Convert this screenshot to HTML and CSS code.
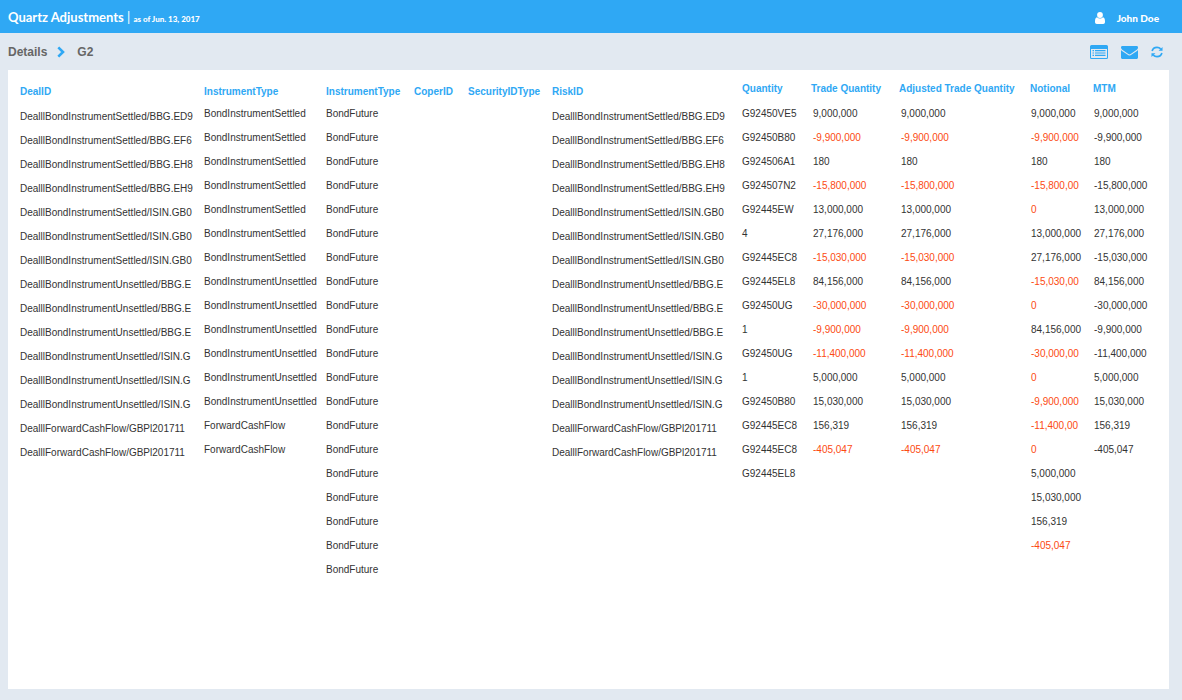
FILE: index.html
```html
<!DOCTYPE html>
<html lang="en">
<head>
<meta charset="utf-8">
<title>Quartz Adjustments</title>
<link rel="stylesheet" href="styles.css">
</head>
<body>
<header class="topbar">
  <h1 class="title">Quartz Adjustments <span class="divider">|</span> <span class="asof">as of Jun. 13, 2017</span></h1>
  <a class="user" href="#">
    <svg class="user-icon" viewBox="0 0 10 12" aria-hidden="true"><circle cx="5" cy="3" r="2.9"/><path d="M2 5.2C.6 5.6 0 7 0 9.4V10c0 1.2.7 2 1.8 2h6.4C9.300 12 10 11.200 10 10v-.6C10 7 9.400 5.600 8 5.200A4 4 0 0 1 2 5.200z"/></svg>
    <span>John Doe</span>
  </a>
</header>
<nav class="subbar" aria-label="Breadcrumb">
  <div class="crumbs">
    <a href="#">Details</a>
    <svg class="chevron" viewBox="0 0 8 12" aria-hidden="true"><path d="M1.300 1.300 6 6l-4.700 4.700"/></svg>
    <span>G2</span>
  </div>
  <div class="actions">
    <button type="button" aria-label="List view"><svg width="18" height="14" viewBox="0 0 18 14"><path fill-rule="evenodd" d="M1.500 0h15A1.500 1.500 0 0 1 18 1.500v11a1.500 1.500 0 0 1-1.500 1.500h-15A1.500 1.500 0 0 1 0 12.500v-11A1.500 1.500 0 0 1 1.500 0zM1 4v8.500c0 .3.200.5.500.5h15c.3 0 .5-.2.500-.5V4z"/><path d="M2.500 5h1.500v1.200H2.500zM5 5h10.500v1.200H5zM2.500 7.400h1.500v1.200H2.500zM5 7.400h10.500v1.200H5zM2.500 9.800h1.500V11H2.500zM5 9.800h10.500V11H5z"/></svg></button>
    <button type="button" aria-label="Mail"><svg width="17" height="13" viewBox="0 0 17 13"><path d="M1.400 0h14.200C16.500 0 17 .6 17 1.400c0 1-.7 1.900-1.600 2.500L10 7.700c-.6.400-1 .7-1.500.7S7.600 8.100 7 7.700L1.600 3.900C.8 3.400 0 2.300 0 1.500 0 .6.500 0 1.400 0z"/><path d="M0 4.100c.3.300.6.500 1 .8l5.300 3.700c.7.500 1.400.9 2.200.9s1.500-.4 2.200-.9L16 4.900c.4-.3.700-.5 1-.8v7.400c0 .8-.7 1.500-1.500 1.500h-14C.7 13 0 12.300 0 11.500z"/></svg></button>
    <button type="button" aria-label="Refresh"><svg width="12" height="12" viewBox="0 0 13 12"><g fill="none" stroke="currentColor" stroke-width="1.800"><path d="M1.200 4.900C1.800 2.600 4 1 6.500 1c1.600 0 3 .6 4 1.600"/><path d="M11.800 7.100C11.200 9.400 9 11 6.500 11c-1.600 0-3-.6-4-1.600"/></g><path d="M12.500.5v4.200H8.200zM.5 11.500V7.300h4.300z"/></svg></button>
  </div>
</nav>
<main class="panel">
<table class="deals">
<colgroup><col class="c-deal"><col class="c-type"><col class="c-kind"><col class="c-coper"><col class="c-security"><col class="c-risk"><col class="c-quantity"><col class="c-trade"><col class="c-adjusted"><col class="c-notional"><col class="c-mtm"></colgroup>
<thead><tr><th class="low">DealID</th><th class="low">InstrumentType</th><th class="low">InstrumentType</th><th class="low">CoperID</th><th class="low">SecurityIDType</th><th class="low">RiskID</th><th>Quantity</th><th>Trade Quantity</th><th>Adjusted Trade Quantity</th><th>Notional</th><th>MTM</th></tr></thead>
<tbody>
<tr><td class="low">DealllBondInstrumentSettled/BBG.ED9</td><td>BondInstrumentSettled</td><td>BondFuture</td><td></td><td></td><td class="low">DealllBondInstrumentSettled/BBG.ED9</td><td>G92450VE5</td><td class="num">9,000,000</td><td class="num">9,000,000</td><td class="amt">9,000,000</td><td class="amt">9,000,000</td></tr>
<tr><td class="low">DealllBondInstrumentSettled/BBG.EF6</td><td>BondInstrumentSettled</td><td>BondFuture</td><td></td><td></td><td class="low">DealllBondInstrumentSettled/BBG.EF6</td><td>G92450B80</td><td class="num neg">-9,900,000</td><td class="num neg">-9,900,000</td><td class="amt neg">-9,900,000</td><td class="amt">-9,900,000</td></tr>
<tr><td class="low">DealllBondInstrumentSettled/BBG.EH8</td><td>BondInstrumentSettled</td><td>BondFuture</td><td></td><td></td><td class="low">DealllBondInstrumentSettled/BBG.EH8</td><td>G924506A1</td><td class="num">180</td><td class="num">180</td><td class="amt">180</td><td class="amt">180</td></tr>
<tr><td class="low">DealllBondInstrumentSettled/BBG.EH9</td><td>BondInstrumentSettled</td><td>BondFuture</td><td></td><td></td><td class="low">DealllBondInstrumentSettled/BBG.EH9</td><td>G924507N2</td><td class="num neg">-15,800,000</td><td class="num neg">-15,800,000</td><td class="amt neg">-15,800,00</td><td class="amt">-15,800,000</td></tr>
<tr><td class="low">DealllBondInstrumentSettled/ISIN.GB0</td><td>BondInstrumentSettled</td><td>BondFuture</td><td></td><td></td><td class="low">DealllBondInstrumentSettled/ISIN.GB0</td><td>G92445EW</td><td class="num">13,000,000</td><td class="num">13,000,000</td><td class="amt neg">0</td><td class="amt">13,000,000</td></tr>
<tr><td class="low">DealllBondInstrumentSettled/ISIN.GB0</td><td>BondInstrumentSettled</td><td>BondFuture</td><td></td><td></td><td class="low">DealllBondInstrumentSettled/ISIN.GB0</td><td>4</td><td class="num">27,176,000</td><td class="num">27,176,000</td><td class="amt">13,000,000</td><td class="amt">27,176,000</td></tr>
<tr><td class="low">DealllBondInstrumentSettled/ISIN.GB0</td><td>BondInstrumentSettled</td><td>BondFuture</td><td></td><td></td><td class="low">DealllBondInstrumentSettled/ISIN.GB0</td><td>G92445EC8</td><td class="num neg">-15,030,000</td><td class="num neg">-15,030,000</td><td class="amt">27,176,000</td><td class="amt">-15,030,000</td></tr>
<tr><td class="low">DealllBondInstrumentUnsettled/BBG.E</td><td>BondInstrumentUnsettled</td><td>BondFuture</td><td></td><td></td><td class="low">DealllBondInstrumentUnsettled/BBG.E</td><td>G92445EL8</td><td class="num">84,156,000</td><td class="num">84,156,000</td><td class="amt neg">-15,030,00</td><td class="amt">84,156,000</td></tr>
<tr><td class="low">DealllBondInstrumentUnsettled/BBG.E</td><td>BondInstrumentUnsettled</td><td>BondFuture</td><td></td><td></td><td class="low">DealllBondInstrumentUnsettled/BBG.E</td><td>G92450UG</td><td class="num neg">-30,000,000</td><td class="num neg">-30,000,000</td><td class="amt neg">0</td><td class="amt">-30,000,000</td></tr>
<tr><td class="low">DealllBondInstrumentUnsettled/BBG.E</td><td>BondInstrumentUnsettled</td><td>BondFuture</td><td></td><td></td><td class="low">DealllBondInstrumentUnsettled/BBG.E</td><td>1</td><td class="num neg">-9,900,000</td><td class="num neg">-9,900,000</td><td class="amt">84,156,000</td><td class="amt">-9,900,000</td></tr>
<tr><td class="low">DealllBondInstrumentUnsettled/ISIN.G</td><td>BondInstrumentUnsettled</td><td>BondFuture</td><td></td><td></td><td class="low">DealllBondInstrumentUnsettled/ISIN.G</td><td>G92450UG</td><td class="num neg">-11,400,000</td><td class="num neg">-11,400,000</td><td class="amt neg">-30,000,00</td><td class="amt">-11,400,000</td></tr>
<tr><td class="low">DealllBondInstrumentUnsettled/ISIN.G</td><td>BondInstrumentUnsettled</td><td>BondFuture</td><td></td><td></td><td class="low">DealllBondInstrumentUnsettled/ISIN.G</td><td>1</td><td class="num">5,000,000</td><td class="num">5,000,000</td><td class="amt neg">0</td><td class="amt">5,000,000</td></tr>
<tr><td class="low">DealllBondInstrumentUnsettled/ISIN.G</td><td>BondInstrumentUnsettled</td><td>BondFuture</td><td></td><td></td><td class="low">DealllBondInstrumentUnsettled/ISIN.G</td><td>G92450B80</td><td class="num">15,030,000</td><td class="num">15,030,000</td><td class="amt neg">-9,900,000</td><td class="amt">15,030,000</td></tr>
<tr><td class="low">DealllForwardCashFlow/GBPl201711</td><td>ForwardCashFlow</td><td>BondFuture</td><td></td><td></td><td class="low">DealllForwardCashFlow/GBPl201711</td><td>G92445EC8</td><td class="num">156,319</td><td class="num">156,319</td><td class="amt neg">-11,400,00</td><td class="amt">156,319</td></tr>
<tr><td class="low">DealllForwardCashFlow/GBPl201711</td><td>ForwardCashFlow</td><td>BondFuture</td><td></td><td></td><td class="low">DealllForwardCashFlow/GBPl201711</td><td>G92445EC8</td><td class="num neg">-405,047</td><td class="num neg">-405,047</td><td class="amt neg">0</td><td class="amt">-405,047</td></tr>
<tr><td></td><td></td><td>BondFuture</td><td></td><td></td><td></td><td>G92445EL8</td><td></td><td></td><td class="amt">5,000,000</td><td></td></tr>
<tr><td></td><td></td><td>BondFuture</td><td></td><td></td><td></td><td></td><td></td><td></td><td class="amt">15,030,000</td><td></td></tr>
<tr><td></td><td></td><td>BondFuture</td><td></td><td></td><td></td><td></td><td></td><td></td><td class="amt">156,319</td><td></td></tr>
<tr><td></td><td></td><td>BondFuture</td><td></td><td></td><td></td><td></td><td></td><td></td><td class="amt neg">-405,047</td><td></td></tr>
<tr><td></td><td></td><td>BondFuture</td><td></td><td></td><td></td><td></td><td></td><td></td><td></td><td></td></tr>
</tbody>
</table>
</main>
</body>
</html>
```
FILE: styles.css
```css
* { box-sizing: border-box; }

body {
  margin: 0;
  min-height: 100vh;
  display: flex;
  flex-direction: column;
  background: #e2e9f1;
  color: #333;
  font-family: "Liberation Sans", Arial, sans-serif;
  font-size: 10px;
}

a { color: inherit; text-decoration: none; }

.topbar {
  display: flex;
  align-items: center;
  justify-content: space-between;
  height: 33px;
  padding: 2px 23px 0 8px;
  background: #2fa8f4;
  color: #fff;
  font-family: Lato, sans-serif;
}

.title { margin: 0; font-size: 13px; font-weight: 700; line-height: 16px; white-space: nowrap; }
.divider { font-weight: 400; }
.asof { font-size: 8px; font-weight: 900; }

.user {
  display: flex;
  align-items: center;
  gap: 12px;
  font-size: 10px;
  font-weight: 900;
}
.user-icon { width: 10px; height: 12px; fill: currentColor; }

.subbar {
  display: flex;
  align-items: center;
  justify-content: space-between;
  height: 37px;
  padding: 1px 19px 0 8px;
}

.crumbs {
  display: flex;
  align-items: center;
  color: #666;
  font-size: 12px;
  font-weight: 700;
}
.chevron {
  width: 8px;
  height: 12px;
  margin: 0 12px 0 10px;
  fill: none;
  stroke: #2fa8f4;
  stroke-width: 2.6;
}

.actions { display: flex; align-items: center; gap: 13px; }
.actions button {
  display: flex;
  padding: 0;
  border: 0;
  background: none;
  color: #2fa8f4;
  cursor: pointer;
}
.actions svg { fill: currentColor; }

.panel {
  flex: 1;
  margin: 0 13px 11px 8px;
  padding: 10px 0 0 12px;
  background: #fff;
}

.deals {
  width: 100%;
  table-layout: fixed;
  border-collapse: collapse;
  line-height: 12px;
}
.deals th, .deals td {
  height: 24px;
  padding: 4px 0 0;
  text-align: left;
  vertical-align: top;
  white-space: nowrap;
}
.deals th { padding-top: 3px; color: #2fa8f4; font-weight: 700; }
.deals th.low { padding-top: 6px; }
.deals td.low { padding-top: 7px; }
.deals td.num { padding-left: 2px; }
.deals td.amt { padding-left: 1px; }
.deals .neg { color: #fc4a12; }

.c-deal { width: 184px; }
.c-type { width: 122px; }
.c-kind { width: 88px; }
.c-coper { width: 54px; }
.c-security { width: 84px; }
.c-risk { width: 190px; }
.c-quantity { width: 69px; }
.c-trade { width: 88px; }
.c-adjusted { width: 131px; }
.c-notional { width: 63px; }
```
